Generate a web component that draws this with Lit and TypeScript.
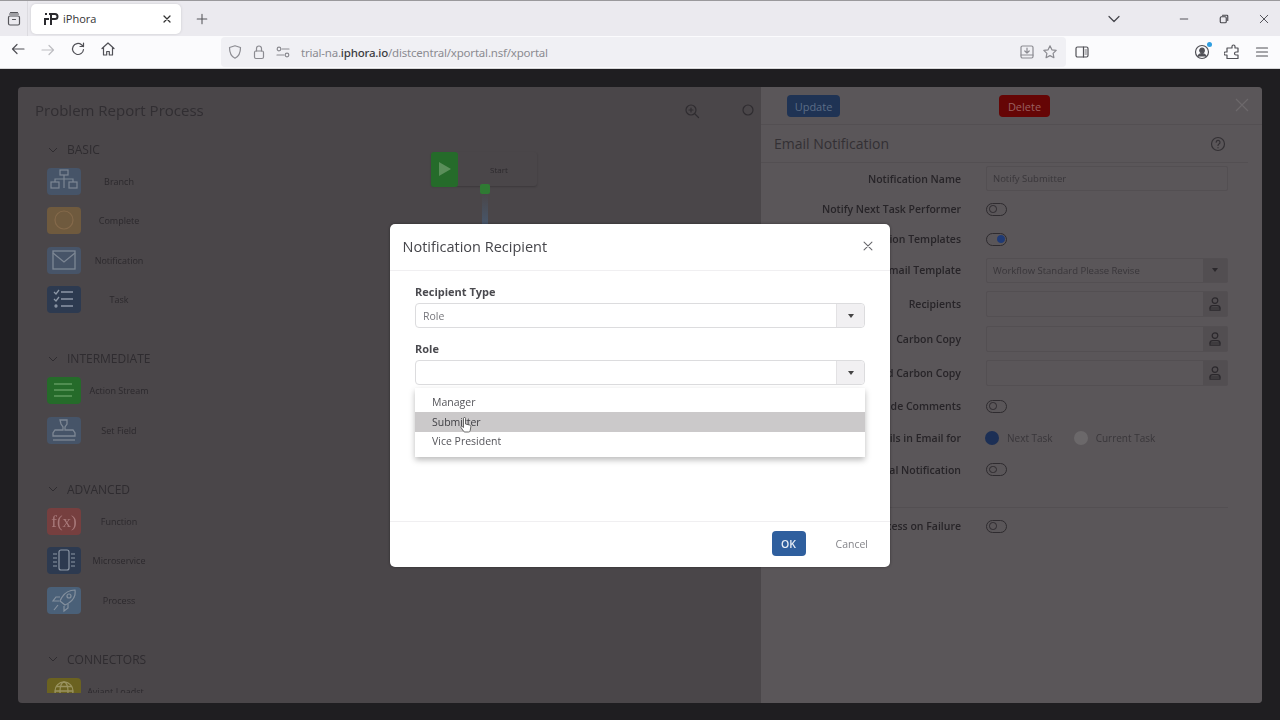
import { css, html, svg, LitElement } from "lit";
import { customElement } from "lit/decorators.js";

const ic = (w: number, body: unknown) =>
  html`<svg width=${w} height=${w} viewBox="0 0 16 16" fill="none" stroke="currentColor" stroke-width="1.2" stroke-linecap="round" stroke-linejoin="round">${body}</svg>`;

const person = ic(
  16,
  svg`<circle cx="8" cy="4.6" r="2.8"/><path d="M3 14.2v-2c0-1.6 1.2-2.6 2.8-2.6h4.4c1.6 0 2.8 1 2.8 2.6v2z"/><path d="M3 12h10"/>`
);

type Item = { label: string; color: string; icon: unknown };
type Section = { title: string; items: Item[] };

const S = 'stroke="#8d97a6"';
const sections: Section[] = [
  {
    title: "Basic",
    items: [
      {
        label: "Branch",
        color: "#465468",
        icon: svg`<g fill="none" stroke="#7d8794" stroke-width="1.2"><rect x="13" y="2" width="8" height="5"/><rect x="4" y="14" width="8" height="6"/><rect x="22" y="14" width="8" height="6"/><path d="M17 7v4M8 14v-3h18v3M17 11v9"/></g>`,
      },
      {
        label: "Complete",
        color: "#6f5a3e",
        icon: svg`<circle cx="17" cy="13" r="9" fill="none" stroke="#84694a" stroke-width="1.2"/>`,
      },
      {
        label: "Notification",
        color: "#475468",
        icon: svg`<g fill="none" stroke="#7d8794" stroke-width="1.3"><rect x="6" y="4" width="22" height="18"/><path d="M6 6l11 9 11-9"/></g>`,
      },
      {
        label: "Task",
        color: "#2d3a50",
        icon: svg`<g fill="none" stroke="#8d97a6" stroke-width="1.3"><path d="M7 6l2 2 3-4M7 13l2 2 3-4M14 6h12M14 13h12M14 20h12"/><circle cx="9" cy="20" r="1"/></g>`,
      },
    ],
  },
  {
    title: "Intermediate",
    items: [
      {
        label: "Action Stream",
        color: "#256b2a",
        icon: svg`<path d="M7 7h18M7 13h20M7 19h18" fill="none" stroke="#5f9a5f" stroke-width="1.3"/>`,
      },
      {
        label: "Set Field",
        color: "#465468",
        icon: svg`<g fill="none" stroke="#7d8794" stroke-width="1.3"><path d="M13 3h7v4l-2 3v3h8l2 3v3H6v-3l2-3h8v-3l-2-3z"/><path d="M6 23h22"/></g>`,
      },
    ],
  },
  {
    title: "Advanced",
    items: [
      {
        label: "Function",
        color: "#763f3f",
        icon: svg`<text x="17" y="19" text-anchor="middle" font-family="Liberation Serif, serif" font-size="17" fill="#a8797a">f(x)</text>`,
      },
      {
        label: "Microservice",
        color: "#2d3a50",
        icon: svg`<g fill="none" stroke="#8d97a6" stroke-width="1.2"><rect x="12" y="3" width="10" height="20" rx="2"/><path d="M6 7h4M6 11h4M6 15h4M6 19h4M24 7h4M24 11h4M24 15h4M24 19h4"/></g>`,
      },
      {
        label: "Process",
        color: "#4a6078",
        icon: svg`<g fill="none" stroke="#84909e" stroke-width="1.2"><path d="M28 3c-7 0-12 4-15 11l5 4c7-3 11-8 10-15z"/><circle cx="22" cy="9" r="2"/><path d="M13 10H9l-3 4h6M21 17v4l-4 3v-5M11 18l-4 5"/></g>`,
      },
    ],
  },
  {
    title: "Connectors",
    items: [
      {
        label: "Aviant Loadst...",
        color: "#6b6220",
        icon: svg`<g fill="none" stroke="#9a9360" stroke-width="1.3"><circle cx="17" cy="13" r="9"/><ellipse cx="17" cy="13" rx="4" ry="9"/><path d="M8 13h18M9 8.500h16M9 17.500h16"/></g>`,
      },
      { label: "", color: "#1f5870", icon: "" },
    ],
  },
];

const chevron = html`<svg class="chev" width="10" height="6" viewBox="0 0 10 6" fill="none" stroke="currentColor" stroke-width="1"><path d="M1 1l4 4 4-4"/></svg>`;

@customElement("app-root")
class AppRoot extends LitElement {
  static styles = css`
    :host {
      display: block;
      width: 1280px;
      height: 720px;
      overflow: hidden;
      position: relative;
      font-family: "Open Sans", "Noto Sans", sans-serif;
      background: #1f1e21;
    }
    * {
      box-sizing: border-box;
    }

    /* browser chrome */
    .tabbar {
      height: 36px;
      background: #ebeaef;
      border-top: 1px solid #9a999c;
      display: flex;
      align-items: center;
      color: #4a4a50;
    }
    .tabs-btn {
      width: 28px;
      height: 100%;
      display: flex;
      align-items: center;
      justify-content: center;
      border-right: 1px solid #dcdbe0;
      color: #55555a;
    }
    .tab {
      margin-left: 3px;
      width: 150px;
      height: 30px;
      background: #fff;
      border-radius: 5px;
      box-shadow: 0 0 3px #0002;
      display: flex;
      align-items: center;
      padding: 0 8px 0 13px;
      font-size: 11px;
      color: #333;
      gap: 4px;
    }
    .tab span {
      flex: 1;
    }
    .plus {
      margin-left: 14px;
      display: flex;
      color: #55555a;
    }
    .win {
      margin-left: auto;
      display: flex;
      align-items: center;
      color: #44444a;
    }
    .win .list {
      margin-right: 56px;
    }
    .win .btns {
      display: flex;
      gap: 28px;
      margin-right: 10px;
    }
    .toolbar {
      height: 33px;
      background: #fbfbfd;
      display: flex;
      align-items: center;
      padding: 0 10px 0 10px;
      border-bottom: 1px solid #d6d6d8;
      color: #505056;
    }
    .nav {
      display: flex;
      gap: 14px;
      width: 211px;
    }
    .nav .off {
      color: #bdbdc2;
    }
    .url {
      width: 845px;
      height: 30px;
      background: #f0f0f4;
      border-radius: 4px;
      display: flex;
      align-items: center;
      padding: 0 8px 0 6px;
      gap: 8px;
      font-family: "Noto Sans", sans-serif;
      font-size: 11.500px;
      letter-spacing: -0.2px;
      color: #8b8b91;
    }
    .url b {
      font-weight: 500;
      color: #3c3c42;
    }
    .url .addr {
      flex: 1;
      margin-left: 2px;
    }
    .url .end {
      display: flex;
      gap: 7px;
    }
    .side {
      margin-left: 8px;
      display: flex;
    }
    .right-tools {
      margin-left: auto;
      display: flex;
      gap: 14px;
      align-items: center;
    }
    .acct {
      position: relative;
      display: flex;
    }
    .acct i {
      position: absolute;
      top: -2px;
      right: -2px;
      width: 5px;
      height: 5px;
      border-radius: 50%;
      background: #2f9ee0;
    }

    /* dimmed page behind the modal */
    .page {
      height: 651px;
      padding: 18px 18px 17px;
    }
    .app {
      display: flex;
      height: 100%;
      background: #4a4649;
      border-radius: 4px;
      overflow: hidden;
      filter: blur(0.4px);
    }
    .left {
      width: 743px;
      display: flex;
      flex-direction: column;
      position: relative;
    }
    .title {
      font-size: 15px;
      color: #312e32;
      padding: 13px 0 0 17px;
      height: 50px;
    }
    .palette {
      margin-left: 29px;
      width: 130px;
      height: 556px;
      overflow: hidden;
      color: #2f2c30;
    }
    .sec {
      margin-bottom: 27px;
    }
    .sec h3 {
      margin: 0;
      height: 25px;
      display: flex;
      align-items: center;
      gap: 8px;
      padding-left: 0;
      font-weight: 400;
      font-size: 12px;
      text-transform: uppercase;
      color: #2f2c30;
    }
    .chev {
      margin-left: 1px;
      margin-right: 1px;
    }
    .it {
      height: 39.330px;
      display: flex;
      align-items: center;
      font-size: 9px;
      color: #2c292d;
    }
    .it .pic {
      width: 34px;
      height: 27px;
      border-radius: 4px;
      flex: none;
    }
    .it .pic svg {
      display: block;
    }
    .it span {
      width: 76px;
      text-align: center;
      white-space: nowrap;
    }
    .zoom {
      position: absolute;
      top: 16px;
      left: 666px;
      color: #2f2c30;
      display: flex;
      gap: 41px;
    }
    .node {
      position: absolute;
      left: 413px;
      top: 65px;
      width: 106px;
      height: 34px;
      display: flex;
      align-items: center;
      border-radius: 3px;
      box-shadow: 0 1px 2px #0003;
      font-size: 8px;
      color: #2c292d;
    }
    .node .play {
      width: 27px;
      height: 35px;
      background: #256b2a;
      border-radius: 3px;
      display: flex;
      align-items: center;
      justify-content: center;
    }
    .node span {
      margin-left: 32px;
    }
    .port {
      position: absolute;
      left: 462px;
      top: 97px;
      width: 10px;
      height: 10px;
      border-radius: 2px;
      background: #2f7a33;
    }
    .wire {
      position: absolute;
      left: 464px;
      top: 107px;
      width: 6px;
      height: 30px;
      background: linear-gradient(#4a4649, #47566a);
    }

    .right {
      flex: 1;
      background: #5a5659;
      display: flex;
      flex-direction: column;
      color: #2b282c;
    }
    .actions {
      height: 38px;
      padding: 8px 13px 0 26px;
      display: flex;
      align-items: flex-start;
      border-bottom: 1px solid #534f52;
    }
    .btn {
      height: 22px;
      border-radius: 4px;
      font-size: 11px;
      display: flex;
      align-items: center;
      justify-content: center;
    }
    .update {
      width: 53px;
      background: #1f3354;
      color: #5c6d86;
    }
    .delete {
      width: 51px;
      margin-left: 159px;
      background: #650505;
      color: #996060;
    }
    .x {
      margin-left: auto;
      color: #6c686b;
      display: flex;
      margin-top: 3px;
      margin-right: 0;
    }
    .heading {
      height: 38px;
      display: flex;
      align-items: center;
      justify-content: space-between;
      padding: 0 22px 0 13px;
      font-size: 14px;
      color: #333034;
      border-bottom: 1px solid #534f52;
      margin-right: 14px;
    }
    .form {
      display: grid;
      grid-template-columns: 200px 242px;
      grid-template-rows: 31px 30px 30px 32px 35px 35px 34px 32px 32px 31px 23px 36px;
      column-gap: 25px;
      align-items: center;
    }
    .lbl {
      text-align: right;
      font-size: 10.500px;
      font-weight: 600;
      white-space: nowrap;
      color: #272428;
    }
    .box {
      height: 25px;
      border: 1px solid #534f52;
      border-radius: 2px;
      font-size: 9.500px;
      color: #39363a;
      display: flex;
      align-items: center;
      padding-left: 6px;
    }
    .box.tall {
      height: 26px;
    }
    .box .side-btn {
      margin-left: auto;
      width: 24px;
      height: 100%;
      background: #524e51;
      display: flex;
      align-items: center;
      justify-content: center;
      color: #2b282c;
    }
    .box .caret,
    .f-btn .caret {
      width: 0;
      height: 0;
      border: 3.500px solid transparent;
      border-top: 4px solid currentColor;
      border-bottom: 0;
    }
    .toggle {
      width: 21px;
      height: 13px;
      border: 1.300px solid #2e2b2f;
      border-radius: 7px;
      position: relative;
    }
    .toggle i {
      position: absolute;
      left: 2px;
      top: 1.500px;
      width: 7.500px;
      height: 7.500px;
      border-radius: 50%;
      border: 1px solid #2e2b2f;
    }
    .toggle.on i {
      left: 10px;
      background: #1f3a75;
      border-color: #1f3a75;
    }
    .radios {
      display: flex;
      align-items: center;
      font-size: 10px;
      color: #39363a;
    }
    .radio {
      width: 14px;
      height: 14px;
      border-radius: 50%;
      background: #1c2f55;
      margin-right: 8px;
      margin-left: -1px;
    }
    .radio.off {
      background: #6b686a;
      margin-left: 21px;
    }
    .rule {
      grid-column: 1 / 3;
      border-top: 1px solid #534f52;
      align-self: end;
      margin-left: 13px;
    }

    /* modal */
    .modal {
      position: absolute;
      left: 390px;
      top: 224px;
      width: 500px;
      height: 343px;
      background: #fff;
      border-radius: 5px;
      box-shadow: 0 0 3px #0006;
      display: flex;
      flex-direction: column;
    }
    .m-head {
      height: 47px;
      flex: none;
      display: flex;
      align-items: center;
      justify-content: space-between;
      padding: 0 15px 2px 12.500px;
      border-bottom: 1px solid #f0eff1;
      font-size: 14.500px;
      color: #46464b;
    }
    .m-head svg {
      color: #66666b;
    }
    .m-body {
      flex: 1;
      padding: 11px 25px 0;
      display: flex;
      flex-direction: column;
    }
    .m-label {
      height: 18px;
      display: flex;
      align-items: center;
      font-size: 11px;
      font-weight: 700;
      color: #4a4a4f;
    }
    .field {
      position: relative;
      height: 25px;
      margin-top: 3px;
      margin-bottom: 11px;
      border: 1px solid #dcdcde;
      border-radius: 4px;
      display: flex;
      align-items: center;
      padding-left: 7px;
      font-size: 10.500px;
      color: #77777c;
    }
    .f-btn {
      margin-left: auto;
      width: 28px;
      height: 100%;
      background: #f1f0f2;
      border-left: 1px solid #e3e2e4;
      border-radius: 0 4px 4px 0;
      display: flex;
      align-items: center;
      justify-content: center;
      color: #444;
    }
    .menu {
      position: absolute;
      left: -1px;
      right: -1px;
      top: 27px;
      height: 69px;
      padding-top: 4px;
      background: #fff;
      box-shadow: 0 3px 6px #0004;
      font-size: 10.500px;
      color: #55555a;
    }
    .menu div {
      height: 19.500px;
      display: flex;
      align-items: center;
      padding-left: 17px;
    }
    .menu .hi {
      background: #cbc9ca;
      color: #3f3f44;
      height: 20px;
    }
    .m-foot {
      height: 46px;
      flex: none;
      border-top: 1px solid #f0eff1;
      display: flex;
      align-items: center;
      justify-content: flex-end;
      padding: 0 22px 2px 0;
      gap: 30px;
      font-size: 10.500px;
    }
    .ok {
      width: 34px;
      height: 25px;
      border-radius: 4px;
      background: #2f5f9e;
      color: #e8eef6;
      font-weight: 600;
      display: flex;
      align-items: center;
      justify-content: center;
    }
    .cancel {
      color: #85858a;
    }
    .cursor {
      position: absolute;
      left: 460px;
      top: 417px;
    }
  `;

  renderPalette() {
    return sections.map(
      (s) => html`<div class="sec">
        <h3>${chevron}${s.title}</h3>
        ${s.items.map(
          (i) => html`<div class="it">
            <div class="pic" style="background:${i.color}">
              <svg width="34" height="27" viewBox="0 0 34 27">${i.icon}</svg>
            </div>
            <span>${i.label}</span>
          </div>`
        )}
      </div>`
    );
  }

  renderForm() {
    const toggle = (on = false) => html`<div class="toggle ${on ? "on" : ""}"><i></i></div>`;
    return html`<div class="form">
      <div class="lbl">Notification Name</div>
      <div class="box">Notify Submitter</div>
      <div class="lbl">Notify Next Task Performer</div>
      ${toggle()}
      <div class="lbl">Use Notification Templates</div>
      ${toggle(true)}
      <div class="lbl">Email Template</div>
      <div class="box">Workflow Standard Please Revise<div class="side-btn"><i class="caret"></i></div></div>
      <div class="lbl">Recipients</div>
      <div class="box tall"><div class="side-btn">${person}</div></div>
      <div class="lbl">Carbon Copy</div>
      <div class="box tall"><div class="side-btn">${person}</div></div>
      <div class="lbl">Blind Carbon Copy</div>
      <div class="box tall"><div class="side-btn">${person}</div></div>
      <div class="lbl">Include Comments</div>
      ${toggle()}
      <div class="lbl">Show Details in Email for</div>
      <div class="radios">
        <i class="radio"></i>Next Task<i class="radio off"></i>Current Task
      </div>
      <div class="lbl">Additional Notification</div>
      ${toggle()}
      <div class="rule"></div>
      <div class="lbl">Stop Process on Failure</div>
      ${toggle()}
    </div>`;
  }

  render() {
    return html`
      <div class="tabbar">
        <div class="tabs-btn">
          ${ic(16, svg`<rect x="2.500" y="5" width="11" height="9" rx="1.500"/><path d="M3.500 3h9M4.500 1.500h7M6.500 8.500h3"/>`)}
        </div>
        <div class="tab">
          <svg width="15" height="14" viewBox="0 0 15 14" fill="#2a2a2e">
            <rect x="1" y="1" width="2" height="2" />
            <rect x="0" y="6" width="5" height="2" />
            <rect x="0" y="8" width="2" height="5" />
            <path d="M5 1h6a3.500 3.500 0 0 1 0 7H8v5H6V3H5zM8 3v3h3a1.500 1.500 0 0 0 0-3z" />
          </svg>
          <span>iPhora</span>
          ${ic(12, svg`<path d="M4 4l8 8M12 4l-8 8" stroke-width="1.700"/>`)}
        </div>
        <div class="plus">${ic(14, svg`<path d="M8 2.500v11M2.500 8h11"/>`)}</div>
        <div class="win">
          <div class="list" style="display:flex">${ic(16, svg`<path d="M3 5.500l5 5 5-5"/>`)}</div>
          <div class="btns">
            ${ic(12, svg`<path d="M3 8h10"/>`)}
            ${ic(12, svg`<rect x="3" y="5" width="8" height="8" rx="1.500" stroke-width="1.500"/><path d="M6 3h6a1 1 0 0 1 1 1v6" stroke-width="1.500"/>`)}
            ${ic(12, svg`<path d="M3 3l10 10M13 3L3 13"/>`)}
          </div>
        </div>
      </div>
      <div class="toolbar">
        <div class="nav">
          ${ic(16, svg`<path d="M14 8H2.500M7 3.500L2.500 8 7 12.500"/>`)}
          <span class="off">${ic(16, svg`<path d="M2 8h11.500M9 3.500L13.500 8 9 12.500"/>`)}</span>
          ${ic(16, svg`<path d="M13.500 8.500A5.500 5.500 0 1 1 11.500 3.700L13.500 5.500M13.500 2v3.500H10"/>`)}
          ${ic(16, svg`<path d="M2 7.500L8 2l6 5.500M3.500 6.500V14h3.200v-3.500h2.600V14h3.200V6.500"/>`)}
        </div>
        <div class="url">
          ${ic(16, svg`<path d="M8 1.800l5.500 1.700c0 5-1 8.700-5.500 10.700C3.500 12.200 2.500 8.500 2.500 3.500z"/>`)}
          ${ic(16, svg`<rect x="3.500" y="7" width="9" height="7.500" rx="1.500"/><path d="M5.500 7V4.500a2.500 2.500 0 0 1 5 0V7"/>`)}
          ${ic(16, svg`<path d="M7 5h7M2 11h7"/><circle cx="4" cy="5" r="1.800"/><circle cx="12" cy="11" r="1.800"/>`)}
          <span class="addr">trial-na.<b>iphora.io</b>/distcentral/xportal.nsf/xportal</span>
          <div class="end">
            ${ic(16, svg`<rect x="2" y="2" width="12" height="12" rx="1.500"/><path d="M2 11h12M8 4v5M5.800 7L8 9l2.200-2"/>`)}
            ${ic(16, svg`<path d="M8 1.800l1.900 4 4.300.6-3.100 3 .8 4.300L8 11.600l-3.900 2.100.8-4.300-3.100-3 4.300-.6z"/>`)}
          </div>
        </div>
        <div class="side">
          ${ic(16, svg`<rect x="2" y="3" width="12" height="10" rx="1.500"/><path d="M9.500 3v10"/><path d="M11 6h1.500M11 8h1.500M11 10h1.500" stroke-width=".8"/>`)}
        </div>
        <div class="right-tools">
          <div class="acct">
            ${ic(16, svg`<circle cx="8" cy="8" r="6.500"/><circle cx="8" cy="6.500" r="2.300" fill="currentColor"/><path d="M3.800 12.500c1-2 2.500-2.800 4.200-2.800s3.200.8 4.200 2.800" fill="currentColor"/>`)}<i></i>
          </div>
          ${ic(16, svg`<path d="M8 2.500a1.500 1.500 0 0 1 3 0V4h3v4h-2a1.500 1.500 0 0 0 0 3h2v3.500H3V11H1.500a1.500 1.500 0 0 1 0-3H3V4h5z"/>`)}
          ${ic(16, svg`<path d="M2.500 4h11M2.500 8h11M2.500 12h11"/>`)}
        </div>
      </div>
      <div class="page">
        <div class="app">
          <div class="left">
            <div class="title">Problem Report Process</div>
            <div class="palette">${this.renderPalette()}</div>
            <div class="zoom">
              ${ic(16, svg`<circle cx="7" cy="7" r="5"/><path d="M11 11l3.500 3.500M7 5v4M5 7h4"/>`)}
              ${ic(16, svg`<circle cx="7" cy="7" r="5"/>`)}
            </div>
            <div class="node">
              <div class="play">
                <svg width="12" height="14" viewBox="0 0 12 14"><path d="M0 0l12 7-12 7z" fill="#5a8f5a" /></svg>
              </div>
              <span>Start</span>
            </div>
            <div class="port"></div>
            <div class="wire"></div>
          </div>
          <div class="right">
            <div class="actions">
              <div class="btn update">Update</div>
              <div class="btn delete">Delete</div>
              <div class="x">
                <svg width="14" height="14" viewBox="0 0 14 14" fill="none" stroke="currentColor" stroke-width="1.200"><path d="M1 1l12 12M13 1L1 13" /></svg>
              </div>
            </div>
            <div class="heading">
              Email Notification
              ${ic(16, svg`<circle cx="8" cy="8" r="6.500"/><path d="M6.200 6.200a1.900 1.900 0 1 1 2.800 1.700c-.7.400-1 .8-1 1.600"/><path d="M8 11.600v.2"/>`)}
            </div>
            ${this.renderForm()}
          </div>
        </div>
      </div>

      <div class="modal">
        <div class="m-head">
          Notification Recipient
          ${ic(14, svg`<path d="M3.500 3.500l9 9M12.500 3.500l-9 9"/>`)}
        </div>
        <div class="m-body">
          <div class="m-label">Recipient Type</div>
          <div class="field">Role<div class="f-btn"><i class="caret"></i></div></div>
          <div class="m-label">Role</div>
          <div class="field">
            <div class="f-btn"><i class="caret"></i></div>
            <div class="menu">
              <div>Manager</div>
              <div class="hi">Submitter</div>
              <div>Vice President</div>
            </div>
          </div>
        </div>
        <div class="m-foot">
          <div class="ok">OK</div>
          <div class="cancel">Cancel</div>
        </div>
      </div>
      <svg class="cursor" width="12" height="16" viewBox="0 0 12 16" fill="#fff" stroke="#444" stroke-width=".8">
        <path d="M3.500 1.500a1 1 0 0 1 2 0V7l4 1c1 .3 1.500 1 1.300 2l-.6 3.500c-.1.800-.7 1.500-1.500 1.500H5c-.7 0-1.200-.3-1.600-.9L1 10.500c-.5-.8.500-1.700 1.300-1l1.200 1z" />
      </svg>
    `;
  }
}

declare global {
  interface HTMLElementTagNameMap {
    "app-root": AppRoot;
  }
}
